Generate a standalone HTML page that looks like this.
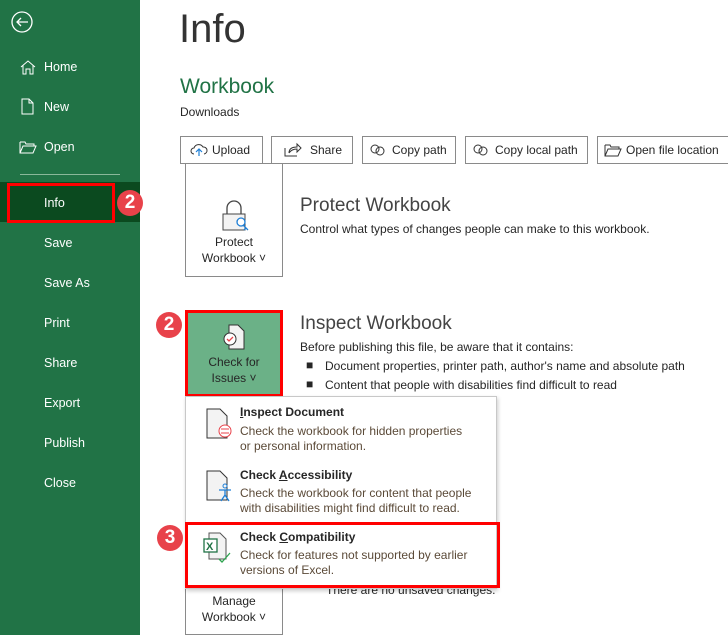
<!DOCTYPE html>
<html><head><style>
*{margin:0;padding:0;box-sizing:border-box}
body{width:728px;height:635px;overflow:hidden;background:#fff;font-family:"Liberation Sans",sans-serif;position:relative;color:#262626}
.side{position:absolute;left:0;top:0;width:140px;height:635px;background:#217346}
.it{position:absolute;left:44px;color:#fff;font-size:12.5px}
.a{position:absolute}
.btn{position:absolute;top:136px;height:28px;border:1px solid #8a8a8a;font-size:12px;line-height:26px;padding-left:10px;color:#262626;background:#fff}
.big{position:absolute;left:185px;width:98px;border:1px solid #8a8a8a;background:#fff;text-align:center;font-size:12px;color:#262626;line-height:16px}
.badge{position:absolute;width:26px;height:26px;border-radius:50%;background:#e8424a;color:#fff;font-size:19px;font-weight:bold;text-align:center;line-height:26px}
.h{position:absolute;left:300px;font-size:19px;color:#444;font-weight:300}
.t{position:absolute;font-size:12px;color:#262626}
.mt{position:absolute;left:240px;font-size:12px;font-weight:bold;color:#262626}
.md{position:absolute;left:240px;font-size:12px;color:#5b4a38;line-height:15px}
</style></head><body>
<div class="side">
<svg class="a" style="left:10px;top:10px" width="24" height="24"><circle cx="12" cy="12" r="10" fill="none" stroke="#fff" stroke-width="1.3"/><path d="M7 12h11M11 8l-4 4 4 4" fill="none" stroke="#fff" stroke-width="1.3"/></svg>
<svg class="a" style="left:20px;top:59px" width="16" height="16"><path d="M1 8L8 2l7 6M3 6v9h3v-5h4v5h3V6" fill="none" stroke="#fff"/></svg>
<svg class="a" style="left:21px;top:98px" width="14" height="17"><path d="M1 1h7l4 4v11H1zM8 1v4h4" fill="none" stroke="#fff"/></svg>
<svg class="a" style="left:19px;top:140px" width="18" height="14"><path d="M1 2h5l1 2h8v2M1 2v11h13l3-7H4l-3 7" fill="none" stroke="#fff"/></svg>
<div class="it" style="top:60px">Home</div>
<div class="it" style="top:100px">New</div>
<div class="it" style="top:140px">Open</div>
<div class="a" style="left:20px;top:174px;width:100px;height:1px;background:#8ab89a"></div>
<div class="a" style="left:0;top:182px;width:140px;height:40px;background:#0b4a1f"></div>
<div class="a" style="left:7px;top:183px;width:108px;height:40px;border:3px solid #ff0000"></div>
<div class="it" style="top:196px">Info</div>
<div class="it" style="top:236px">Save</div>
<div class="it" style="top:276px">Save As</div>
<div class="it" style="top:316px">Print</div>
<div class="it" style="top:356px">Share</div>
<div class="it" style="top:396px">Export</div>
<div class="it" style="top:436px">Publish</div>
<div class="it" style="top:476px">Close</div>
</div>
<div class="badge" style="left:117px;top:190px">2</div>
<div class="a" style="left:179px;top:7px;font-size:40px;font-weight:300;color:#333">Info</div>
<div class="a" style="left:180px;top:75px;font-size:21px;color:#217346">Workbook</div>
<div class="t" style="left:180px;top:105px">Downloads</div>
<div class="btn" style="left:180px;width:83px;padding-left:31px">Upload</div>
<div class="btn" style="left:271px;width:82px;padding-left:38px">Share</div>
<div class="btn" style="left:362px;width:94px;padding-left:29px">Copy path</div>
<div class="btn" style="left:465px;width:123px;padding-left:29px">Copy local path</div>
<div class="btn" style="left:597px;width:140px;padding-left:28px">Open file location</div>
<svg class="a" style="left:190px;top:142px" width="18" height="16"><path d="M4 12a3 3 0 010-6 5 5 0 019-1 3 3 0 011 7" fill="none" stroke="#333"/><path d="M9 14V7M6 10l3-3 3 3" fill="none" stroke="#1e7fd6" stroke-width="1.2"/></svg>
<svg class="a" style="left:284px;top:141px" width="18" height="16"><path d="M1 7v8h12M5 12c0-4 3-6 8-6V3l4 4-4 4V8c-3 0-6 1-8 4" fill="none" stroke="#333"/></svg>
<svg class="a" style="left:369px;top:143px" width="18" height="14"><circle cx="6" cy="6" r="4" fill="none" stroke="#333"/><circle cx="11" cy="8" r="4" fill="none" stroke="#333"/></svg>
<svg class="a" style="left:472px;top:143px" width="18" height="14"><circle cx="6" cy="6" r="4" fill="none" stroke="#333"/><circle cx="11" cy="8" r="4" fill="none" stroke="#333"/></svg>
<svg class="a" style="left:604px;top:143px" width="18" height="14"><path d="M1 2h5l1 2h8v2M1 2v11h13l3-7H4l-3 7" fill="none" stroke="#333"/></svg>

<div class="big" style="top:163px;height:114px"><svg style="margin-top:36px;display:block;margin-left:36px" width="28" height="34" viewBox="0 0 28 34"><path d="M5 14V8a7 7 0 0114 0v6" fill="none" stroke="#444" stroke-width="1.3"/><rect x="1" y="14" width="22" height="16" fill="#f3f3f3" stroke="#444"/><circle cx="19" cy="22" r="4" fill="#fff" stroke="#1e7fd6" stroke-width="1.3"/><path d="M21 25l5 5M24 28l-2 2" stroke="#1e7fd6" stroke-width="1.3"/></svg><div style="margin-top:0">Protect<br>Workbook ˅</div></div>
<div class="h" style="top:195px">Protect Workbook</div>
<div class="t" style="left:300px;top:222px">Control what types of changes people can make to this workbook.</div>

<div class="big" style="top:310px;height:87px;background:#6bb187;border:3px solid #ff0000"><svg style="display:block;margin:10px 0 0 34px" width="26" height="28"><path d="M7 2h9l6 6v18H7z" fill="#f3f3f3" stroke="#333"/><circle cx="8" cy="16" r="6" fill="#fff" stroke="#333"/><path d="M5 16l2 2 4-4" fill="none" stroke="#e8424a" stroke-width="1.3"/></svg><div style="margin-top:3px">Check for<br>Issues ˅</div></div>
<div class="badge" style="left:156px;top:312px">2</div>
<div class="h" style="top:313px">Inspect Workbook</div>
<div class="t" style="left:300px;top:340px">Before publishing this file, be aware that it contains:</div>
<div class="t" style="left:306px;top:358px">■</div><div class="t" style="left:325px;top:359px">Document properties, printer path, author's name and absolute path</div>
<div class="t" style="left:306px;top:377px">■</div><div class="t" style="left:325px;top:378px">Content that people with disabilities find difficult to read</div>

<div class="big" style="top:560px;height:75px"><div style="margin-top:32px">Manage<br>Workbook ˅</div></div>
<div class="t" style="left:326px;top:583px">There are no unsaved changes.</div>

<div class="a" style="left:185px;top:396px;width:312px;height:193px;background:#fff;border:1px solid #c8c8c8;box-shadow:1px 2px 4px rgba(0,0,0,.2)"></div>
<svg class="a" style="left:205px;top:407px" width="30" height="34"><path d="M2 2h13l7 7v22H2z" fill="#f3f3f3" stroke="#333"/><circle cx="20" cy="24" r="6" fill="#fff" stroke="#e8424a"/><path d="M16 22h8M16 26h8" stroke="#e8424a"/></svg>
<div class="mt" style="top:405px"><u>I</u>nspect Document</div>
<div class="md" style="top:424px">Check the workbook for hidden properties<br>or personal information.</div>
<svg class="a" style="left:205px;top:469px" width="30" height="34"><path d="M2 2h13l7 7v22H2z" fill="#f3f3f3" stroke="#333"/><circle cx="20" cy="17" r="2" fill="none" stroke="#1e7fd6"/><path d="M14 21h12M20 21v5l-4 6M20 26l4 6" fill="none" stroke="#1e7fd6" stroke-width="1.3"/></svg>
<div class="mt" style="top:468px">Check <u>A</u>ccessibility</div>
<div class="md" style="top:486px">Check the workbook for content that people<br>with disabilities might find difficult to read.</div>
<div class="a" style="left:185px;top:522px;width:315px;height:66px;border:3px solid #ff0000"></div>
<svg class="a" style="left:201px;top:531px" width="32" height="34"><path d="M8 2h11l6 6v20H8z" fill="#f3f3f3" stroke="#555"/><rect x="3" y="8" width="13" height="13" fill="#fff" stroke="#217346" stroke-width="1.3"/><text x="5" y="19" font-size="11" font-weight="bold" fill="#217346" font-family="Liberation Sans">X</text><path d="M18 28l3 3 8-9" fill="none" stroke="#2ea44f" stroke-width="1.3"/></svg>
<div class="mt" style="top:530px">Check <u>C</u>ompatibility</div>
<div class="md" style="top:548px">Check for features not supported by earlier<br>versions of Excel.</div>
<div class="badge" style="left:157px;top:525px">3</div>
</body></html>
